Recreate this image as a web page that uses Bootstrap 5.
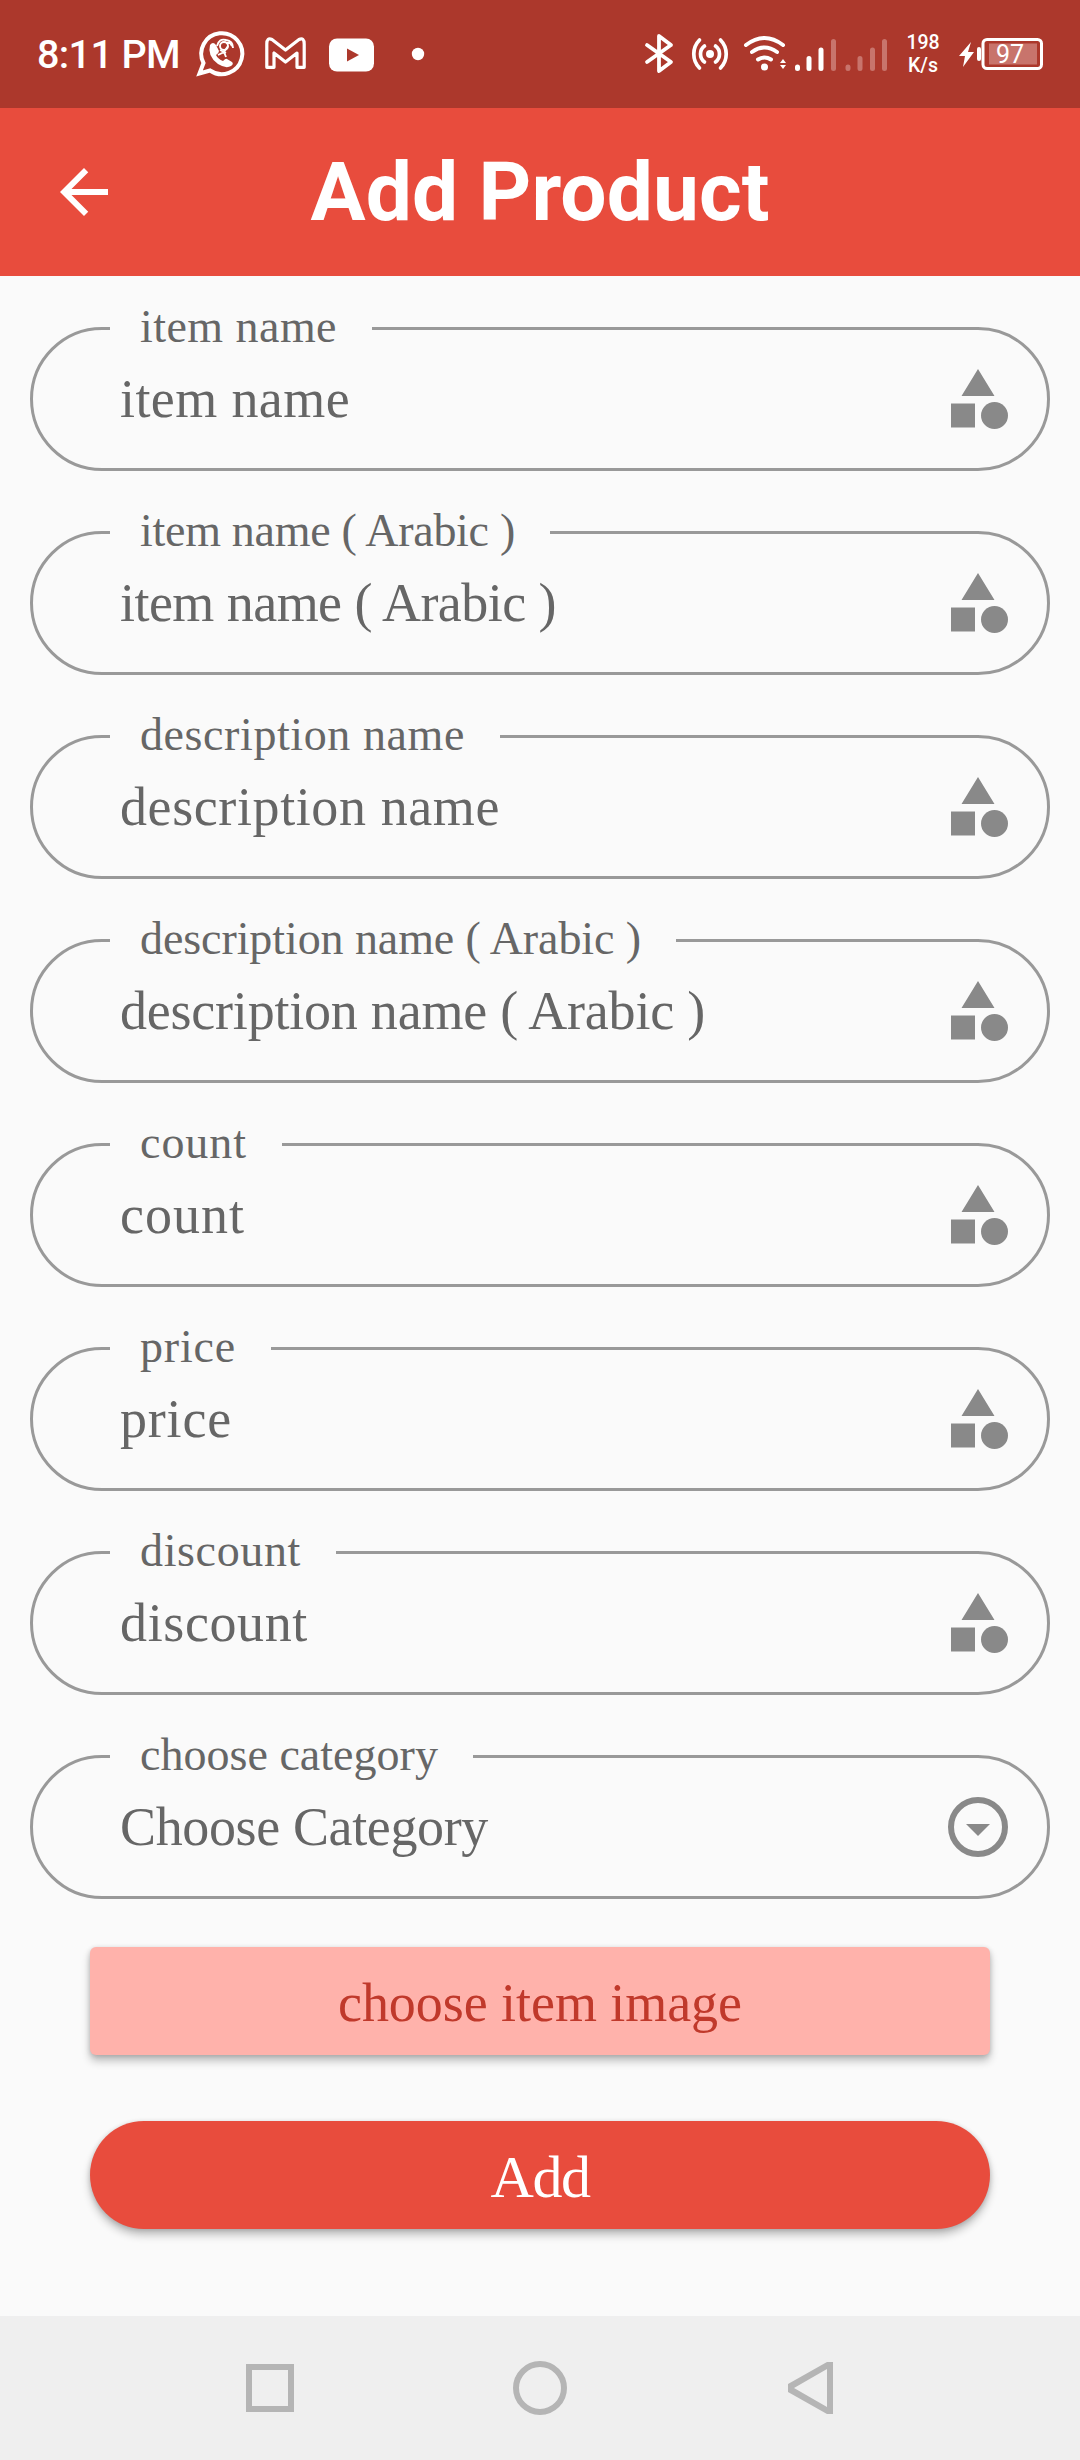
<!DOCTYPE html>
<html lang="en">
<head>
<meta charset="utf-8">
<meta name="viewport" content="width=device-width, initial-scale=1">
<title>Add Product</title>
<link href="https://cdn.jsdelivr.net/npm/bootstrap@5.3.0/dist/css/bootstrap.min.css" rel="stylesheet">
<style>
body{width:1080px;height:2460px;background:#fafafa;font-family:"Liberation Serif",serif;color:#666;overflow:hidden}
svg{display:block;flex:none}
.status-bar{height:108px;background:#ac382c;color:#fff;font-family:Roboto,sans-serif}
.clock{font-size:39.5px;font-weight:500;line-height:48px;padding-left:37px;padding-top:2px;width:195px;white-space:nowrap}
.net-speed{font-size:19.5px;font-weight:500;line-height:23px;width:56px;text-align:center}
.app-bar{height:168px;background:#e84c3d;color:#fff}
.app-title{font:700 82px/168px Roboto,sans-serif}
.side-slot{width:168px}
.form-area{height:2040px;padding:29px 30px 0}
.outlined{height:166px;margin-bottom:38px;border:3px solid #999;border-radius:72px;padding:0 33px 0 88px}
.outlined legend{float:none;width:max-content;margin:0 0 0 -11px;height:47px;padding:0 35px 0 30px;background:#fafafa;font-size:46px;line-height:43px;white-space:nowrap}
.field-value{font-size:54px;line-height:60px;height:60px;margin-top:17px;margin-left:-1px;white-space:nowrap}
.field-icon{margin-top:11px}
.wide-btn{height:108px;width:900px;border:0;padding:4px 0 0;font-family:inherit;box-shadow:0 6px 8px rgba(0,0,0,.24),0 1px 5px rgba(0,0,0,.16)}
.pick-btn,.pick-btn:hover{background:#ffb2ab;color:#c0392b;border-radius:6px;font-size:54px;margin-top:10px}
.add-btn,.add-btn:hover{background:#e84c3d;color:#fff;border-radius:54px;font-size:60px;margin-top:66px}
.nav-strip{height:144px;background:#efefef;padding:0 243px}
</style>
</head>
<body class="d-flex flex-column">
<svg width="0" height="0" class="position-absolute"><defs>
<symbol id="shapes" viewBox="0 0 24 24"><path fill="#898989" d="M12 2 6.5 11h11zM3 13.5h8v8H3z"/><circle fill="#898989" cx="17.5" cy="17.5" r="4.5"/></symbol>
</defs></svg>

<header class="status-bar d-flex align-items-center flex-shrink-0">
  <div class="clock"><span data-w="143">8:11 PM</span></div>
  <svg width="240" height="108" viewBox="195 0 240 108" fill="none" stroke="#fff">
    <path stroke-width="4" d="M199.500 73.500 203.500 63A20.500 20.500 0 1 1 210 70.500Z"/>
    <path fill="#fff" stroke="none" d="M210 45q3-4 6 0l3 6q0 2-3 4 2 4 7 6 3-3 4-2l5 3q2 2-1 4-5 3-13-2-11-8-8-19z"/>
    <g stroke-width="1.900"><circle cx="224" cy="46" r="4"/><path d="M217 46q2-8 9-6 7 1 7 8M218 55l6-3 4-6M224 52l2 5M226 43h4l2 3M220 50l6 3"/></g>
    <path stroke-width="3.200" stroke-linejoin="round" d="M266.800 44Q266.800 37 272 39.500L285.500 50 299 39.500Q304.200 37 304.200 44V67.300H297V53L285.500 62 274 53V67.300H266.800Z"/>
    <rect x="329" y="38.500" width="45" height="33" rx="8" fill="#fff" stroke="none"/>
    <path d="M347 48.500v13l12-6.500z" fill="#ac382c" stroke="none"/>
    <circle cx="418" cy="54" r="6.200" fill="#fff" stroke="none"/>
  </svg>
  <div class="flex-grow-1"></div>
  <svg width="255" height="108" viewBox="640 0 255 108" fill="none" stroke="#fff" stroke-linecap="round" stroke-linejoin="round">
    <path stroke-width="3.800" d="M647 45 671 62 659 71V36L671 45 647 62"/>
    <g stroke-width="3.700"><path d="M699.500 40a20 20 0 0 0 0 28M720.500 40a20 20 0 0 1 0 28M704.500 46a10 10 0 0 0 0 16M715.500 46a10 10 0 0 1 0 16"/></g>
    <circle cx="710" cy="54" r="4" fill="#fff" stroke="none"/>
    <g stroke-width="4"><path d="M746 45q18.500-14 37 0M752 52q12.500-9 25 0M758 59.500q6.500-4 13 0"/></g>
    <circle cx="764.500" cy="67" r="3.500" fill="#fff" stroke="none"/>
    <path fill="#fff" stroke="none" d="M780 63h6l-3-4zM780 65h6l-3 4z"/>
    <g stroke-width="5"><path d="M797.500 67v1.500M809 58.500v10M821 50v18.500"/><path stroke="#c8746c" d="M833.500 41.500v27M848 67v1.500M860 58.500v10M872.500 50v18.500M884.500 41.500v27"/></g>
  </svg>
  <div class="net-speed">198<br>K/s</div>
  <svg width="129" height="108" viewBox="951 0 129 108">
    <path fill="#fff" d="M971 42 959 56h6l-2 11 11-15h-6z"/>
    <rect x="977" y="47" width="4" height="14" rx="2" fill="#fff"/>
    <rect x="983" y="39.500" width="58.500" height="29" rx="4" fill="none" stroke="#fff" stroke-width="3"/>
    <rect x="989" y="43.500" width="48" height="21" fill="#c8746c"/>
    <text x="1010" y="62.500" text-anchor="middle" font-family="Roboto" font-size="25" fill="#fff">97</text>
  </svg>
</header>

<nav class="app-bar d-flex align-items-center justify-content-between flex-shrink-0">
  <div class="side-slot"><svg class="ms-5" width="72" height="72" viewBox="0 0 24 24"><path fill="#fff" d="M20 11H7.830l5.590-5.590L12 4l-8 8 8 8 1.410-1.410L7.830 13H20z"/></svg></div>
  <h1 class="app-title m-0"><span data-w="459">Add Product</span></h1>
  <div class="side-slot"></div>
</nav>

<main class="form-area flex-shrink-0 d-flex flex-column">
  <fieldset class="outlined"><legend><span data-w="197">item name</span></legend>
    <div class="d-flex justify-content-between"><div class="field-value"><span data-w="230">item name</span></div><svg class="field-icon" width="72" height="72"><use href="#shapes"/></svg></div></fieldset>
  <fieldset class="outlined"><legend><span data-w="375">item name ( Arabic )</span></legend>
    <div class="d-flex justify-content-between"><div class="field-value"><span data-w="436">item name ( Arabic )</span></div><svg class="field-icon" width="72" height="72"><use href="#shapes"/></svg></div></fieldset>
  <fieldset class="outlined"><legend><span data-w="325">description name</span></legend>
    <div class="d-flex justify-content-between"><div class="field-value"><span data-w="380">description name</span></div><svg class="field-icon" width="72" height="72"><use href="#shapes"/></svg></div></fieldset>
  <fieldset class="outlined"><legend><span data-w="501">description name ( Arabic )</span></legend>
    <div class="d-flex justify-content-between"><div class="field-value"><span data-w="585">description name ( Arabic )</span></div><svg class="field-icon" width="72" height="72"><use href="#shapes"/></svg></div></fieldset>
  <fieldset class="outlined"><legend><span data-w="107">count</span></legend>
    <div class="d-flex justify-content-between"><div class="field-value"><span data-w="125">count</span></div><svg class="field-icon" width="72" height="72"><use href="#shapes"/></svg></div></fieldset>
  <fieldset class="outlined"><legend><span data-w="96">price</span></legend>
    <div class="d-flex justify-content-between"><div class="field-value"><span data-w="112">price</span></div><svg class="field-icon" width="72" height="72"><use href="#shapes"/></svg></div></fieldset>
  <fieldset class="outlined"><legend><span data-w="161">discount</span></legend>
    <div class="d-flex justify-content-between"><div class="field-value"><span data-w="188">discount</span></div><svg class="field-icon" width="72" height="72"><use href="#shapes"/></svg></div></fieldset>
  <fieldset class="outlined"><legend><span data-w="298">choose category</span></legend>
    <div class="d-flex justify-content-between"><div class="field-value"><span data-w="368">Choose Category</span></div>
    <svg class="field-icon" width="72" height="72" viewBox="0 0 24 24"><circle cx="12" cy="12" r="9" fill="none" stroke="#898989" stroke-width="2"/><path fill="#898989" d="M8 11h8l-4 4z"/></svg></div></fieldset>
  <button class="btn wide-btn pick-btn align-self-center"><span data-w="404">choose item image</span></button>
  <button class="btn wide-btn add-btn align-self-center"><span data-w="99">Add</span></button>
</main>

<footer class="nav-strip d-flex align-items-center justify-content-between flex-shrink-0">
  <svg width="54" height="54" viewBox="0 0 54 54"><rect x="6" y="6" width="42" height="42" fill="none" stroke="#b5b5b5" stroke-width="6"/></svg>
  <svg width="54" height="54" viewBox="0 0 54 54"><circle cx="27" cy="27" r="24" fill="none" stroke="#b5b5b5" stroke-width="6"/></svg>
  <svg width="54" height="54" viewBox="0 0 54 54"><path fill="#b5b5b5" fill-rule="evenodd" d="M44 1h6v52h-6L5 31v-8zM44 8 11 27l33 19z"/></svg>
</footer>
<script src="https://cdn.jsdelivr.net/npm/bootstrap@5.3.0/dist/js/bootstrap.bundle.min.js"></script>
<script>
// Spread letters so each string fills its design width
document.querySelectorAll('[data-w]').forEach(function(s){
  var gap=(+s.dataset.w-s.getBoundingClientRect().width)/s.textContent.length;
  s.style.letterSpacing=gap.toFixed(3)+'px';
});
</script>
</body>
</html>
